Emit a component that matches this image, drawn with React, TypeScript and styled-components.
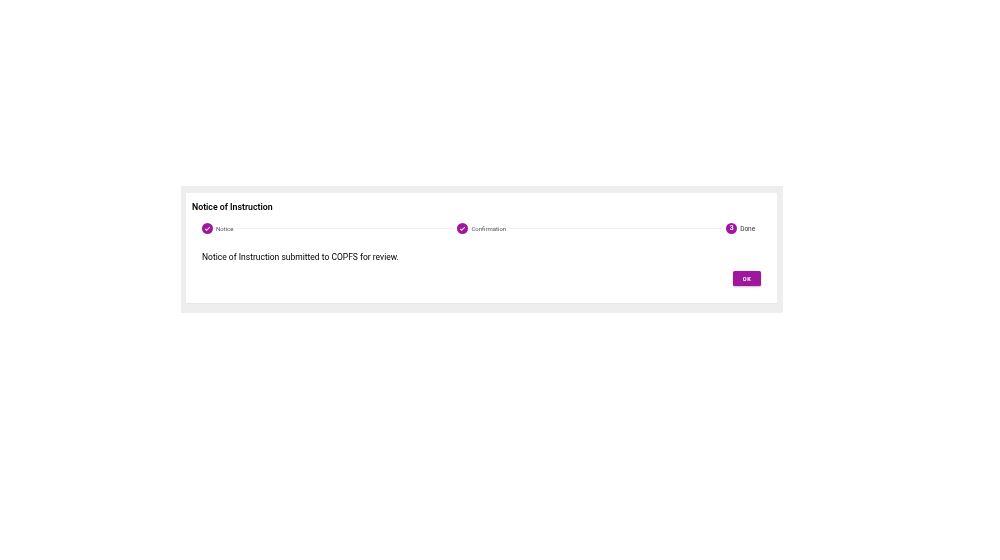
import React from 'react';
import styled, { createGlobalStyle } from 'styled-components';

const GlobalStyle = createGlobalStyle`
  html, body {
    margin: 0;
    padding: 0;
    background: #ffffff;
  }
  body {
    font-family: Roboto, "Liberation Sans", sans-serif;
  }
`;

const Page = styled.div`
  width: 1000px;
  height: 560px;
  padding: 186px 0 0 181px;
  box-sizing: border-box;
`;

const Backdrop = styled.div`
  width: 602px;
  height: 127px;
  box-sizing: border-box;
  padding: 7px 6px 10px 5px;
  background: #eeeeee;
`;

/* the reference is a scaled-up capture, so everything in it is slightly soft */
const Card = styled.div`
  height: 110px;
  box-sizing: border-box;
  padding: 8px 16px 0 6px;
  background: #ffffff;
  box-shadow: 0 1px 1px rgba(0, 0, 0, 0.03);
  filter: blur(0.3px);
`;

const Title = styled.h2`
  margin: 0;
  padding-top: 0.5px;
  font-size: 8.75px;
  line-height: 11px;
  font-weight: 600;
  color: #000000;
`;

const Stepper = styled.div`
  display: flex;
  align-items: center;
  height: 12px;
  margin-top: 9.5px;
  padding-left: 10px;
`;

const Step = styled.div`
  display: flex;
  align-items: center;
  gap: 3px;
  flex: none;
`;

const StepCircle = styled.div`
  display: flex;
  align-items: center;
  justify-content: center;
  width: 11px;
  height: 11px;
  border-radius: 50%;
  background: #a0179f;
  color: #ffffff;
  font-size: 7px;
  font-weight: 500;
`;

const StepLabel = styled.span<{ $active?: boolean }>`
  padding-top: ${props => (props.$active ? '2px' : '0')};
  font-size: ${props => (props.$active ? '6.5px' : '6px')};
  line-height: 11px;
  color: ${props => (props.$active ? '#333333' : '#555555')};
`;

const Connector = styled.div<{ $width: number }>`
  flex: none;
  width: ${props => props.$width}px;
  height: 1px;
  margin: 0 4px;
  background: #eeeeee;
`;

const Message = styled.p`
  margin: 17px 0 0 10px;
  font-size: 8.5px;
  line-height: 12px;
  color: #000000;
`;

const Actions = styled.div`
  display: flex;
  justify-content: flex-end;
  margin-top: 8px;
`;

const OkButton = styled.button`
  width: 28px;
  height: 15px;
  padding: 0;
  border: none;
  border-radius: 1.5px;
  background: #a0179f;
  box-shadow: 0 1px 2px rgba(0, 0, 0, 0.25);
  color: #ffffff;
  font-family: inherit;
  font-size: 5.5px;
  font-weight: 700;
  letter-spacing: 0.5px;
`;

const CheckIcon = () => (
  <svg width="7" height="7" viewBox="0 0 24 24" fill="none" stroke="#ffffff" strokeWidth="3.5">
    <path d="M4 13l5 5L20 7" />
  </svg>
);

export default function App() {
  return (
    <Page>
      <GlobalStyle />
      <Backdrop>
        <Card>
          <Title>Notice of Instruction</Title>
          <Stepper>
            <Step>
              <StepCircle><CheckIcon /></StepCircle>
              <StepLabel>Notice</StepLabel>
            </Step>
            <Connector $width={216} />
            <Step>
              <StepCircle><CheckIcon /></StepCircle>
              <StepLabel>Confirmation</StepLabel>
            </Step>
            <Connector $width={212} />
            <Step>
              <StepCircle>3</StepCircle>
              <StepLabel $active>Done</StepLabel>
            </Step>
          </Stepper>
          <Message>Notice of Instruction submitted to COPFS for review.</Message>
          <Actions>
            <OkButton>OK</OkButton>
          </Actions>
        </Card>
      </Backdrop>
    </Page>
  );
}
